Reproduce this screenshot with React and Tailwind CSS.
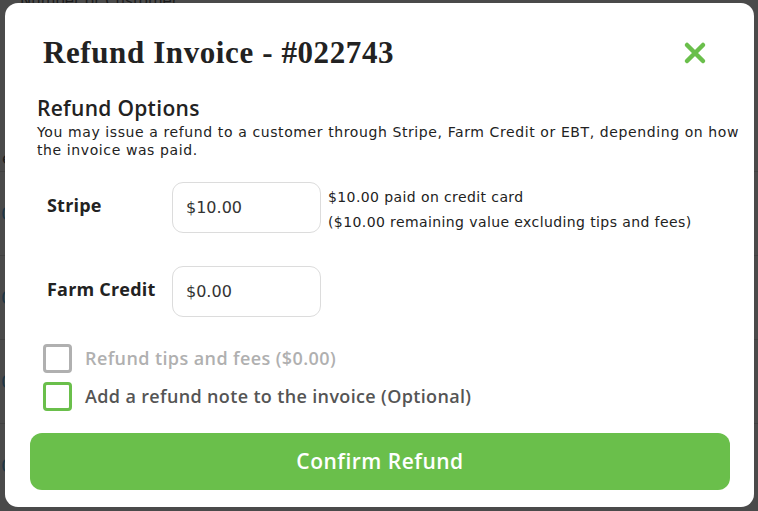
import { useState } from 'react'

const body = "font-['DejaVu_Sans',sans-serif]"
const strong = "font-['Open_Sans',sans-serif]"

const Checkbox = ({ checked, onChange, tone }) => (
  <button
    type="button"
    onClick={onChange}
    className={`w-[29px] h-[29px] rounded-[4px] border-[3px] bg-white shrink-0 ${tone}`}
  >
    {checked && (
      <svg viewBox="0 0 24 24" className="w-full h-full" fill="none" stroke="#6abf4b" strokeWidth="4">
        <path d="M5 12l5 5 9-10" />
      </svg>
    )}
  </button>
)

const AmountRow = ({ label, value, setValue, children }) => (
  <div className="flex items-center h-[51px]">
    <div className={`w-[135px] pl-[10px] -mt-[5px] text-[18px] leading-[24px] font-bold tracking-[0.2px] text-[#222] ${strong}`}>
      {label}
    </div>
    <input
      value={value}
      onChange={(e) => setValue(e.target.value)}
      className="w-[149px] h-[51px] rounded-[11px] border border-[#dcdcdc] px-[13px] text-[16px] text-[#333] outline-none"
    />
    {children}
  </div>
)

export default function App() {
  const [stripe, setStripe] = useState('$10.00')
  const [credit, setCredit] = useState('$0.00')
  const [tips, setTips] = useState(false)
  const [note, setNote] = useState(false)

  // the page behind the dialog, dimmed
  const rows = [0, 1, 2, 3]

  return (
    <div className={`relative w-[758px] h-[511px] overflow-hidden bg-[#4a4a4a] ${body}`}>
      <div className="text-[#1c1c1c] text-[15px] pl-[20px] leading-[14px] -mt-[6px]">Number or Customer</div>
      <div className="mt-[139px] text-[#1c1c1c] text-[16px] pl-[2px]">e</div>
      <div className="flex flex-col">
        {rows.map((r) => (
          <div key={r} className="h-[84px] border-t border-[#414141] flex items-center pl-[1px] text-[#1d3646] text-[18px]">
            0
          </div>
        ))}
      </div>

      <div className="absolute left-[5px] top-[3px] w-[749px] h-[504px] bg-white rounded-[13px] px-[32px] pt-[30px]">
        <div className="flex items-center justify-between pl-[6px] pr-[15px]">
          <h1 className="font-['Liberation_Serif',serif] font-bold text-[31px] tracking-[0.6px] text-[#222] leading-[40px]">
            Refund Invoice - #022743
          </h1>
          <button type="button" className="w-[24px] h-[24px]">
            <svg viewBox="0 0 24 24" className="w-full h-full" fill="none" stroke="#6abf4b" strokeWidth="4.5" strokeLinecap="round">
              <path d="M4 4l16 16M20 4L4 20" />
            </svg>
          </button>
        </div>

        <div className="mt-[22px]">
          <h2 className={`text-[21px] font-semibold tracking-[0.3px] text-[#222] leading-[26px] ${strong}`}>Refund Options</h2>
          <p className="mt-[2px] -mr-[26px] text-[14px] tracking-[0.6px] text-[#222] leading-[18px]">
            You may issue a refund to a customer through Stripe, Farm Credit or EBT, depending on how the invoice was paid.
          </p>
        </div>

        <div className="mt-[23px] flex flex-col gap-[33px]">
          <AmountRow label="Stripe" value={stripe} setValue={setStripe}>
            <div className="self-start mt-[3px] ml-[7px] text-[14px] tracking-[0.4px] text-[#222] leading-[25px]">
              <div>$10.00 paid on credit card</div>
              <div>($10.00 remaining value excluding tips and fees)</div>
            </div>
          </AmountRow>
          <AmountRow label="Farm Credit" value={credit} setValue={setCredit} />
        </div>

        <div className={`mt-[27px] pl-[6px] flex flex-col gap-[9px] ${strong}`}>
          <label className="flex items-center gap-[13px]">
            <Checkbox checked={tips} onChange={() => setTips(!tips)} tone="border-[#b0b0b0]" />
            <span className="text-[18px] font-semibold tracking-[0.4px] text-[#b0b0b0]">Refund tips and fees ($0.00)</span>
          </label>
          <label className="flex items-center gap-[13px]">
            <Checkbox checked={note} onChange={() => setNote(!note)} tone="border-[#6abf4b]" />
            <span className="text-[18px] font-semibold tracking-[0.35px] text-[#555]">Add a refund note to the invoice (Optional)</span>
          </label>
        </div>

        <button
          type="button"
          className={`mt-[22px] -ml-[7px] w-[700px] h-[57px] rounded-[12px] bg-[#6abf4b] text-white text-[21px] font-semibold tracking-[0.5px] ${strong}`}
        >
          Confirm Refund
        </button>
      </div>
    </div>
  )
}
